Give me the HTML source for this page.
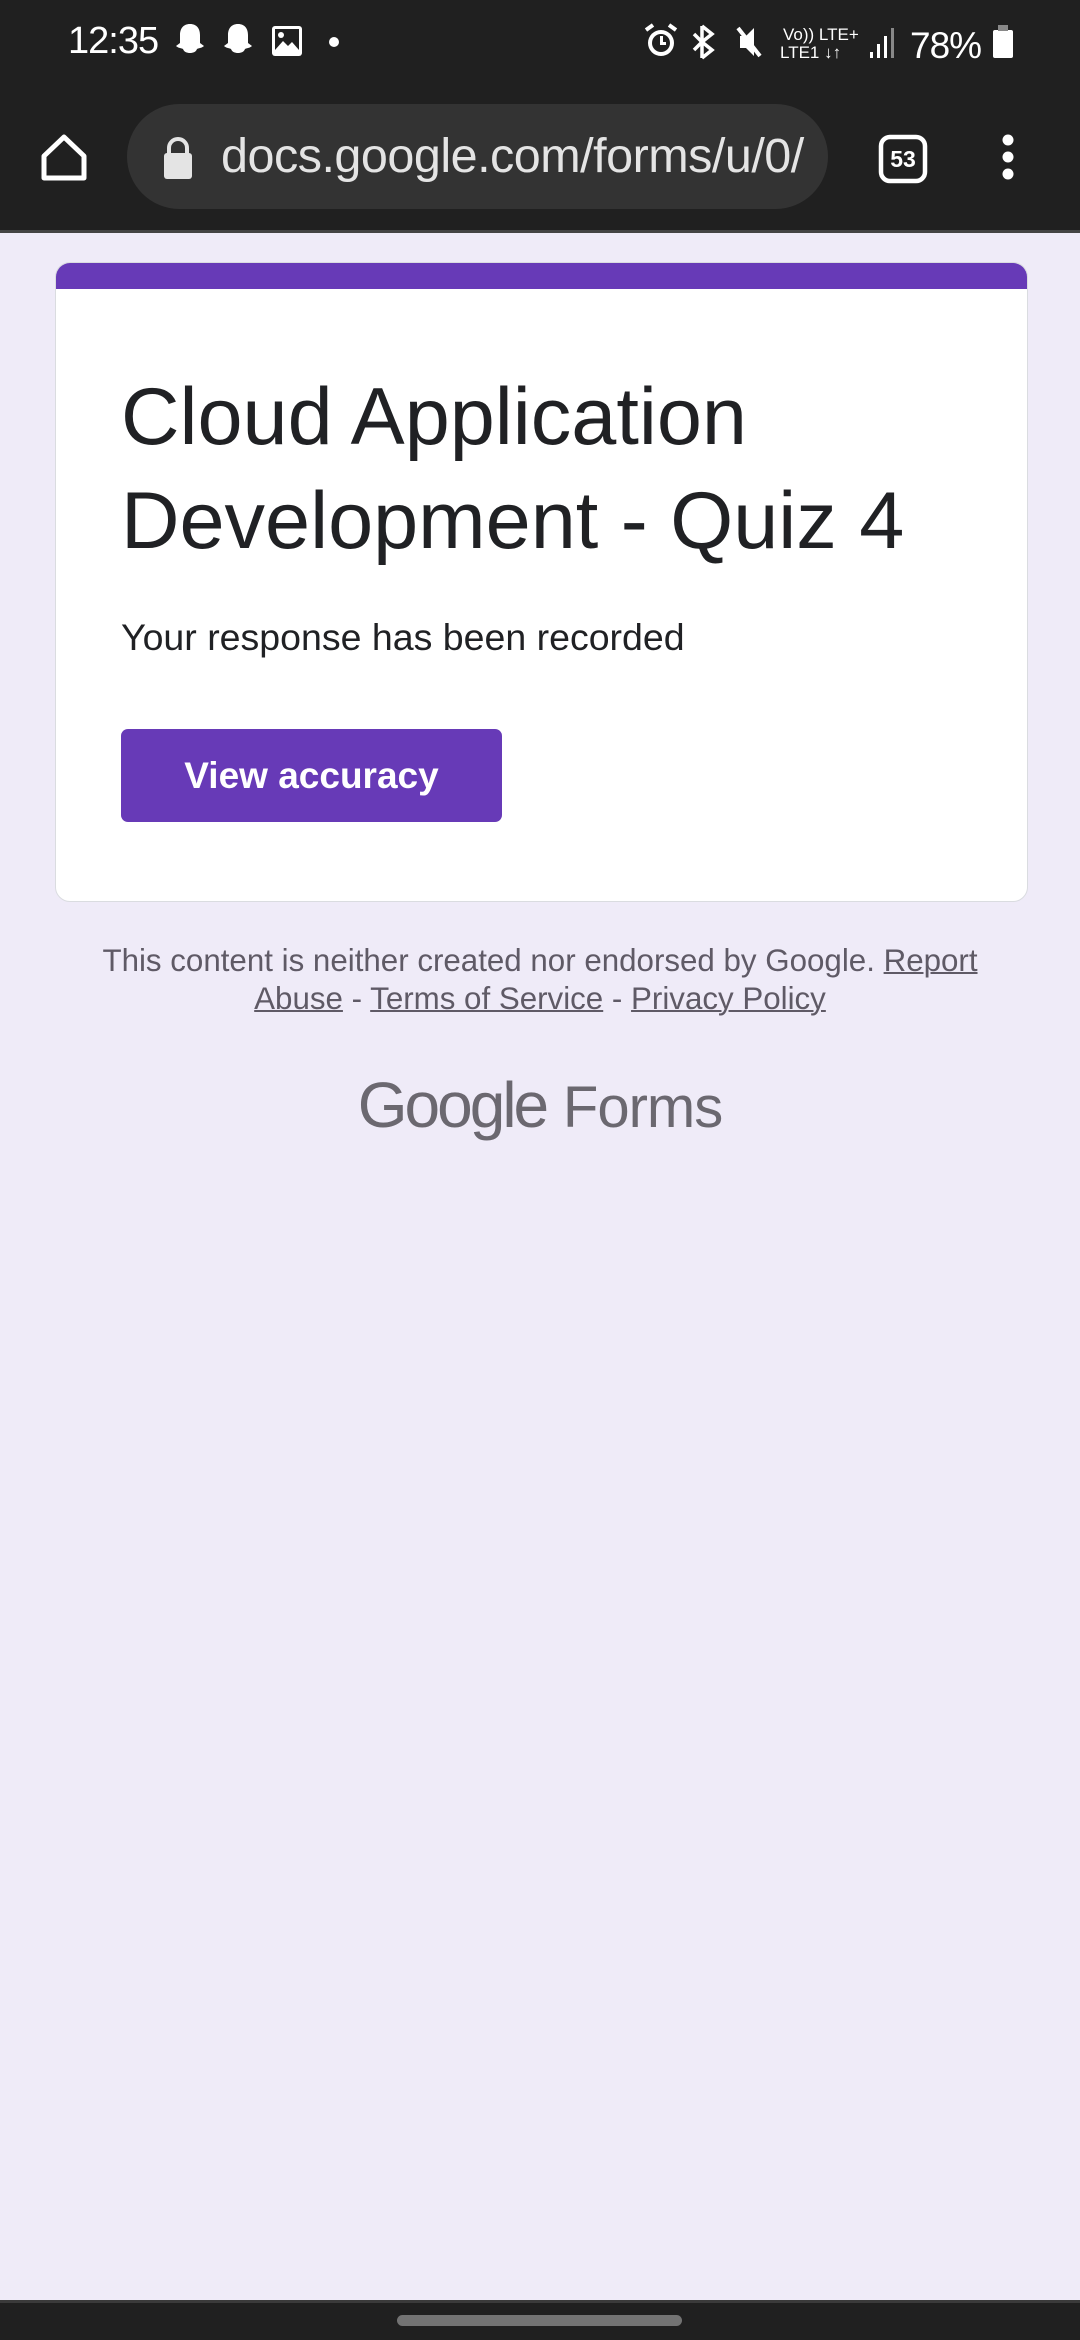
<!DOCTYPE html>
<html><head><meta charset="utf-8"><style>
*{margin:0;padding:0;box-sizing:border-box}
body{width:1080px;height:2340px;background:#EFEBF8;font-family:"Liberation Sans",Roboto,sans-serif;position:relative;overflow:hidden}
.top{position:absolute;left:0;top:0;width:1080px;height:230px;background:#202020}
.div{position:absolute;left:0;top:230px;width:1080px;height:3px;background:#444}
.time{position:absolute;left:68px;top:20px;color:#fff;font-size:38px;letter-spacing:-1px}
.pill{position:absolute;left:127px;top:104px;width:701px;height:105px;border-radius:53px;background:#333}
.url{position:absolute;left:221px;top:128px;color:#e4e4e4;font-size:48.5px;letter-spacing:-0.5px}
.card{position:absolute;left:55px;top:262px;width:973px;height:640px;background:#fff;border-radius:15px;border:1px solid #dadce0;overflow:hidden}
.card .bar{height:26px;background:#673AB7}
h1{position:absolute;left:65px;top:102px;font-weight:400;font-size:81px;line-height:104px;color:#202124}
.resp{position:absolute;left:65px;top:353px;font-size:37.5px;color:#202124}
.btn{position:absolute;left:65px;top:466px;width:381px;height:93px;background:#673AB7;border-radius:7px;color:#fff;font-size:37px;font-weight:bold;text-align:center;line-height:93px}
.foot{position:absolute;left:40px;width:1000px;top:942px;text-align:center;font-size:31.3px;line-height:38px;color:#5f5a66}
.foot u{text-decoration-thickness:2px}
.logo{position:absolute;left:0;width:1080px;top:1068px;text-align:center;font-size:64px;color:#6b6870;letter-spacing:-1px}
.nav{position:absolute;left:0;top:2300px;width:1080px;height:40px;background:#202020;border-top:3px solid #3a3a3a}
.handle{position:absolute;left:397px;top:2315px;width:285px;height:11px;border-radius:6px;background:#737373}
</style></head><body>
<div class="top"></div><div class="div"></div>
<div class="time">12:35</div>
<svg style="position:absolute;left:170px;top:20px" width="190" height="44" viewBox="0 0 190 44" fill="#fff">
<path d="M20 4c-7 0-10 5-10 11v8l-4 3c2 2 5 2 7 3 1 3 4 4 7 4s6-1 7-4c2-1 5-1 7-3l-4-3v-8c0-6-3-11-10-11z"/>
<path d="M68 4c-7 0-10 5-10 11v8l-4 3c2 2 5 2 7 3 1 3 4 4 7 4s6-1 7-4c2-1 5-1 7-3l-4-3v-8c0-6-3-11-10-11z"/>
<rect x="102" y="6" width="30" height="30" rx="3"/><rect x="105" y="9" width="24" height="21" fill="#202020"/><circle cx="111" cy="15" r="3"/><path d="M105 30l8-9 5 5 4-4 7 8z"/>
<circle cx="164" cy="22" r="5"/>
</svg>
<svg style="position:absolute;left:640px;top:20px" width="380" height="44" viewBox="0 0 380 44" fill="#fff">
<circle cx="21" cy="23" r="13"/><circle cx="21" cy="23" r="9" fill="#202020"/><path d="M20 16v9h6v-3h-3v-6z"/><path d="M6 10l7-5M36 10l-7-5" stroke="#fff" stroke-width="4"/>
<path d="M62 6l10 8-10 8 10 8-10 8M62 22V6M62 22v16M54 14l8 8M54 30l8-8" stroke="#fff" stroke-width="3.5" fill="none"/>
<path d="M100 16h6l8-8v28l-8-8h-6z"/><path d="M98 8l22 28" stroke="#fff" stroke-width="4"/>
<text x="143" y="20" font-size="17" font-family="Liberation Sans">Vo)) LTE+</text>
<text x="140" y="38" font-size="17" font-family="Liberation Sans">LTE1 ↓↑</text>
<rect x="230" y="32" width="3" height="6"/><rect x="237" y="24" width="3" height="14"/><rect x="244" y="16" width="3" height="22"/><rect x="251" y="8" width="3" height="30" fill="#888"/>
<text x="270" y="38" font-size="37" font-family="Liberation Sans" letter-spacing="-1">78%</text>
<rect x="353" y="10" width="20" height="28" rx="2"/><rect x="358" y="5" width="10" height="6" fill="#888"/>
</svg>
<svg style="position:absolute;left:38px;top:132px" width="52" height="52" viewBox="0 0 52 52" fill="none" stroke="#fff" stroke-width="5"><path d="M6 24L26 5l20 19v22H6z" stroke-linejoin="round"/></svg>
<div class="pill"></div>
<svg style="position:absolute;left:161px;top:136px" width="34" height="44" viewBox="0 0 34 44"><path d="M8 18v-6a9 9 0 0 1 18 0v6" stroke="#e4e4e4" stroke-width="4" fill="none"/><rect x="3" y="17" width="28" height="26" rx="3" fill="#e4e4e4"/></svg>
<div class="url">docs.google.com/forms/u/0/</div>
<svg style="position:absolute;left:878px;top:134px" width="50" height="50" viewBox="0 0 50 50"><rect x="3" y="3" width="44" height="44" rx="9" fill="none" stroke="#fff" stroke-width="4.5"/><text x="25" y="33" text-anchor="middle" fill="#fff" font-size="23" font-family="Liberation Sans" font-weight="bold">53</text></svg>
<svg style="position:absolute;left:996px;top:134px" width="24" height="50" viewBox="0 0 24 50" fill="#fff"><circle cx="12" cy="6" r="5.5"/><circle cx="12" cy="23" r="5.5"/><circle cx="12" cy="40" r="5.5"/></svg>
<div class="card"><div class="bar"></div>
<h1>Cloud Application<br>Development - Quiz 4</h1>
<div class="resp">Your response has been recorded</div>
<div class="btn">View accuracy</div>
</div>
<div class="foot">This content is neither created nor endorsed by Google. <u>Report</u><br><u>Abuse</u> - <u>Terms of Service</u> - <u>Privacy Policy</u></div>
<div class="logo"><span style="letter-spacing:-3px">Google</span> <span style="font-size:58px">Forms</span></div>
<div class="nav"></div><div class="handle"></div>
</body></html>
